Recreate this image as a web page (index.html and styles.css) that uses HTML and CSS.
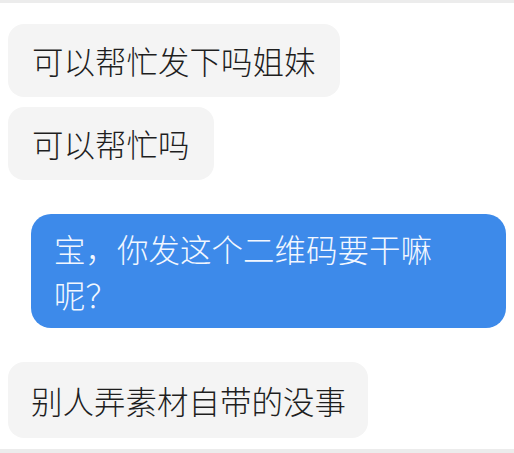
FILE: index.html
```html
<!DOCTYPE html>
<html lang="zh-CN">
<head>
  <meta charset="UTF-8" />
  <meta name="viewport" content="width=device-width, initial-scale=1.0" />
  <title>聊天记录</title>
  <link rel="stylesheet" href="styles.css">
</head>
<body>
  <div class="chat">
    <div class="msg them first">可以帮忙发下吗姐妹</div>
    <div class="msg them">可以帮忙吗</div>
    <div class="msg me">宝，你发这个二维码要干嘛呢？</div>
    <div class="msg them last">别人弄素材自带的没事</div>
  </div>
  <div class="bottom-bar"></div>
</body>
</html>
```

FILE: styles.css
```css
    body {
      margin: 0;
      padding: 0;
      height: 453px;
      background: #fff;
      font-family: "Noto Sans CJK SC", "Noto Sans", sans-serif;
      font-weight: 300;
      display: flex;
      flex-direction: column;
      border-top: 3px solid #ececec;
      box-sizing: border-box;
      overflow: hidden;
    }

    .chat {
      display: flex;
      flex-direction: column;
      align-items: flex-start;
      padding: 21px 8px 0 8px;
    }

    .msg {
      font-size: 31.5px;
      line-height: 46px;
      padding: 13px 24px 14px 24px;
      border-radius: 16px;
    }

    .them {
      background: #f4f4f4;
      color: #1e1e1e;
      margin-top: 10px;
    }

    .them.first {
      margin-top: 0;
    }

    .them.last {
      padding: 15px 22px 15px 23px;
    }

    .me {
      align-self: flex-end;
      box-sizing: border-box;
      width: 475px;
      margin-top: 34px;
      margin-bottom: 24px;
      padding: 11px 50px 11px 23px;
      background: #3d8aea;
      color: #f2f7ff;
      border-radius: 20px;
    }

    .me + .them {
      margin-top: 10px;
    }

    .bottom-bar {
      margin-top: auto;
      height: 4px;
      background: #ececec;
    }
```
